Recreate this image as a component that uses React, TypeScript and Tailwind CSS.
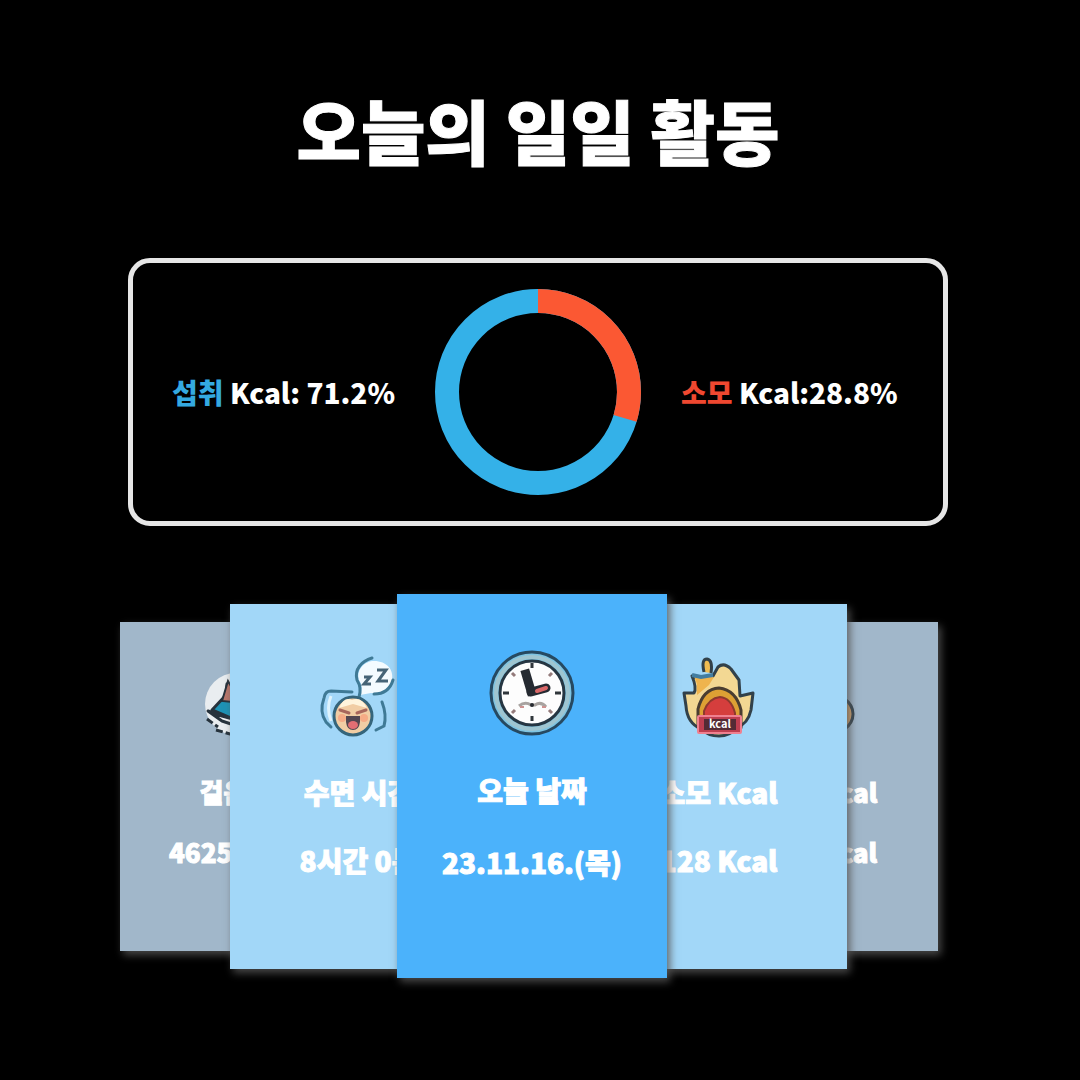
import type { ReactNode } from "react";

function ShoeIcon() {
  return (
    <svg viewBox="0 0 72 72" className="h-[72px] w-[72px]" aria-hidden="true">
      <circle cx="36" cy="36" r="31" fill="#e9edf0" />
      <path d="M12 42 L26 27 L27 16 L33 22 L40 20 L48 36 L64 44 L64 52 L40 54 Z" fill="#1e93b5" stroke="#26323c" strokeWidth="3" strokeLinejoin="round" />
      <path d="M22 33 L28 13 L36 27 L32 34 Z" fill="#b9776c" stroke="#26323c" strokeWidth="2" />
      <path d="M8 43 L22 53 L40 59 L64 58 L64 51 L40 53 L22 48 Z" fill="#f4f6f7" stroke="#26323c" strokeWidth="3" strokeLinejoin="round" />
      <path d="M7 51 L18 59 M16 62 L30 66 H60" stroke="#26323c" strokeWidth="3" strokeDasharray="7 3" fill="none" />
    </svg>
  );
}

function SleepIcon() {
  return (
    <svg viewBox="0 0 84 84" className="h-[84px] w-[84px]" aria-hidden="true">
      <g fill="none" stroke="#3f7a96" strokeWidth="3" strokeLinecap="round">
        <path d="M35 36 L14 35 Q8 35 7 42 Q2 56 9 66 L14 71" />
        <path d="M65 46 Q70 59 67 70 L59 74" />
      </g>
      <path d="M14 40 Q9 52 14 65" stroke="#dff3fc" strokeWidth="3" fill="none" />
      <path d="M43 39 Q47 31 42 24 C39 13 48 5 57 5 C70 5 77 14 75 24 C73 34 63 39 54 37 Z" fill="#f4fbff" />
      <path d="M42 41 Q45 32 40 24 C37 13 45 5 55 2 M76 24 C73 34 66 38 57 38" fill="none" stroke="#3f7a96" strokeWidth="3" strokeLinecap="round" />
      <path d="M47 21 H53 L47 28 H54 M60 14 H69 L61 25 H71" fill="none" stroke="#466477" strokeWidth="3" />
      <circle cx="36" cy="60" r="19" fill="#f1cda4" stroke="#35657b" strokeWidth="3" />
      <path d="M22 52 Q27 40 35 44 Q44 40 50 52 L36 48 Z" fill="#fff4dc" />
      <path d="M23 54 L32 57 M49 54 L40 57" stroke="#a9675c" strokeWidth="3" strokeLinecap="round" />
      <circle cx="25" cy="62" r="4" fill="#f6ab86" />
      <circle cx="47" cy="62" r="4" fill="#f6ab86" />
      <path d="M29 60 H43 V66 Q42 74 36 74 Q30 74 29 66 Z" fill="#534650" />
      <ellipse cx="36" cy="69" rx="5" ry="4" fill="#e36e73" />
    </svg>
  );
}

function ClockIcon() {
  return (
    <svg viewBox="0 0 88 88" className="h-[88px] w-[88px]" aria-hidden="true">
      <circle cx="44" cy="43" r="41" fill="#7ec4e2" stroke="#264961" strokeWidth="3" />
      <circle cx="44" cy="43" r="36" fill="none" stroke="#9fc5d0" strokeWidth="4" />
      <circle cx="44" cy="43" r="32" fill="#fdfdfd" stroke="#263642" strokeWidth="3" />
      <path d="M44 13 V18 M44 66 V71 M15 43 H21 M67 43 H73" stroke="#30363b" strokeWidth="3" />
      <path d="M24 23 L27 26 M64 23 L61 26 M24 63 L27 60 M64 63 L61 60" stroke="#947b7b" strokeWidth="3" />
      <path d="M31 56 Q37 51 43 55 H47 Q53 51 58 57" fill="none" stroke="#a8a3a0" strokeWidth="3" />
      <path d="M32 57 H36 M54 57 H58" stroke="#cd9291" strokeWidth="2" />
      <circle cx="44" cy="55" r="2" fill="#262a30" />
      <path d="M38 24 L43 41" stroke="#252a31" strokeWidth="9" strokeLinecap="square" />
      <path d="M43 42 L58 38" stroke="#252a31" strokeWidth="9" strokeLinecap="round" />
      <path d="M49 41 L58 38" stroke="#d96768" strokeWidth="4" strokeLinecap="round" />
    </svg>
  );
}

function BurnIcon() {
  return (
    <svg viewBox="0 0 84 84" className="h-[84px] w-[84px]" aria-hidden="true">
      <path d="M42 80 Q31 80 24 73 Q10 67 9 50 L7 37 L17 37 Q20 32 15 20 L26 24 L36 20 L41 11 Q47 6 54 13 L62 24 L63 40 L76 37 L74 54 Q71 68 59 72 Q53 80 42 80 Z" fill="#f3d893" stroke="#32414a" strokeWidth="3" strokeLinejoin="round" />
      <path d="M17 20 L20 28 L20 39 L32 29 L37 21" fill="#efb44e" />
      <path d="M15 19 L24 21 L36 19" fill="none" stroke="#437da0" strokeWidth="4" />
      <path d="M27 16 Q24 3 30 3 Q36 4 34 17" fill="#f0bc51" stroke="#32414a" strokeWidth="3" />
      <path d="M21 70 V53 Q26 33 42 32 Q59 34 64 54 V71 Z" fill="#dda034" stroke="#493d31" strokeWidth="3" />
      <path d="M27 64 V55 Q32 42 43 41 Q54 42 58 57 V65 Z" fill="#d53e3d" stroke="#8e382d" strokeWidth="2" />
      <rect x="21" y="60" width="43" height="17" rx="1" fill="#be3e50" stroke="#ef8090" strokeWidth="2" />
      <rect x="27" y="63" width="32" height="11" fill="#542b35" />
      <text x="43" y="72" textAnchor="middle" fill="#ffffff" fontSize="11" fontWeight="700">kcal</text>
    </svg>
  );
}

function MealIcon() {
  return (
    <svg viewBox="0 0 72 72" className="h-[72px] w-[72px]" aria-hidden="true">
      <ellipse cx="36" cy="46" rx="30" ry="22" fill="#e1ad73" stroke="#35454f" strokeWidth="3" />
      <ellipse cx="36" cy="46" rx="17" ry="12" fill="#f4e2bf" />
    </svg>
  );
}

type CardProps = { title: string; value: string; icon: ReactNode; frame: string; text: string; gap: string };

function Card({ title, value, icon, frame, text, gap }: CardProps) {
  return (
    <article className={`row-start-1 flex flex-col items-center leading-8 whitespace-nowrap shadow-[3px_4px_8px_rgba(85,85,85,0.85)] [-webkit-text-stroke:1px_white] ${frame} ${text}`}>
      <span className="[-webkit-text-stroke:0]">{icon}</span>
      <h2 className="mt-9">{title}</h2>
      <p className={gap}>{value}</p>
    </article>
  );
}

function Donut({ sweep }: { sweep: number }) {
  return (
    <svg viewBox="0 0 206 206" className="h-[206px] w-[206px]" role="img" aria-label="섭취 71.2%, 소모 28.8%">
      <circle cx="103" cy="103" r="91" fill="none" stroke="#34b1e8" strokeWidth="24" />
      <circle cx="103" cy="103" r="91" fill="none" stroke="#fb5833" strokeWidth="24" pathLength="100" strokeDasharray={`${sweep} 100`} transform="rotate(-90 103 103)" />
    </svg>
  );
}

export default function App() {
  return (
    <main className="flex min-h-screen flex-col items-center bg-black pt-[78px] pr-9 pb-24 pl-8 font-['Noto_Sans_CJK_KR','Noto_Sans_KR',sans-serif] font-black text-white">
      <h1 className="text-center text-[70px] leading-[104px] [-webkit-text-stroke:1px_white]">오늘의 일일 활동</h1>

      <section className="mt-[76px] grid w-full max-w-[820px] grid-cols-[1fr_auto_1fr] items-center gap-10 rounded-[22px] border-[5px] border-[#e6e6e6] py-[26px] text-[28px] leading-8 whitespace-nowrap">
        <p className="text-right"><span className="text-[#34a9e0]">섭취</span> Kcal: 71.2%</p>
        <Donut sweep={29.7} />
        <p><span className="text-[#ef4830]">소모</span> Kcal:28.8%</p>
      </section>

      <section className="mt-[68px] mr-[18px] grid w-full max-w-[818px] grid-cols-[minmax(0,110fr)_minmax(0,121fr)_minmax(0,46fr)_minmax(0,90fr)_minmax(0,103fr)_minmax(0,77fr)_minmax(0,40fr)_minmax(0,140fr)_minmax(0,91fr)] items-center">
        <Card title="걸음수" value="46250 걸음" icon={<ShoeIcon />} text="text-[26px]" gap="mt-7" frame="col-start-1 col-end-3 bg-[#a1b7ca] pt-[46px] pb-[83px]" />
        <Card title="섭취 Kcal" value="316 Kcal" icon={<MealIcon />} text="text-[26px]" gap="mt-7" frame="col-start-8 col-end-10 bg-[#a1b7ca] pt-[46px] pb-[83px]" />
        <Card title="수면 시간" value="8시간 0분" icon={<SleepIcon />} text="text-[28px]" gap="mt-9" frame="z-10 col-start-2 col-end-5 bg-[#a2d7f8] pt-[52px] pb-[93px]" />
        <Card title="소모 Kcal" value="128 Kcal" icon={<BurnIcon />} text="text-[28px]" gap="mt-9" frame="z-10 col-start-6 col-end-9 bg-[#a2d7f8] pt-[52px] pb-[93px]" />
        <Card title="오늘 날짜" value="23.11.16.(목)" icon={<ClockIcon />} text="text-[28px]" gap="mt-10" frame="z-20 col-start-4 col-end-7 bg-[#4bb2fb] pt-14 pb-[100px]" />
      </section>
    </main>
  );
}
